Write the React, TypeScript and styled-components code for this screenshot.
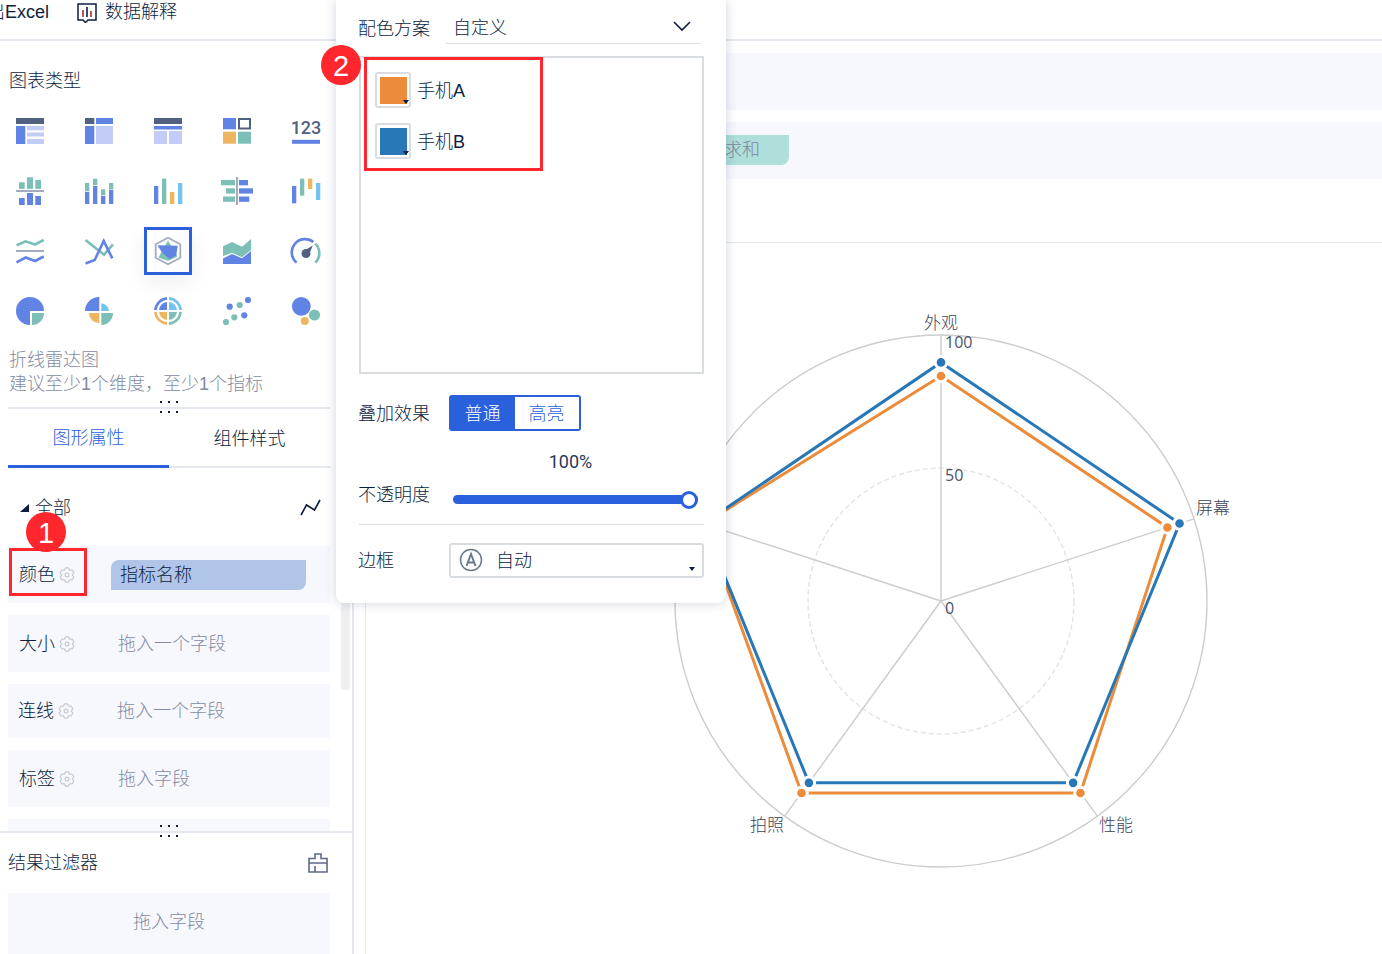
import React from "react";
import styled, { createGlobalStyle, css } from "styled-components";

const palette = {
  ink: "#0b1e40",
  muted: "#828b9f",
  line: "#e4e8ef",
  control: "#d9dde2",
  shelf: "#f7f8fd",
  primary: "#2a60db",
  alert: "#ff262d",
  blue: "#6183e3",
  green: "#7bbfb6",
  orange: "#eeb561",
  sky: "#73c3f1",
  slate: "#516181",
  pale: "#c1cdf6",
  grey: "#a3acbf",
  seriesA: "#ec8b3a",
  seriesB: "#2877b6",
};

const GlobalStyle = createGlobalStyle`
  *, *::before, *::after { box-sizing: border-box; }
  body {
    margin: 0;
    background: #fff;
    color: ${palette.ink};
    font-family: "Liberation Sans", "Noto Sans CJK SC", sans-serif;
    font-size: 18px;
    font-weight: 300;
    line-height: 24px;
  }
  button, select, input { font: inherit; color: inherit; margin: 0; }
  button { padding: 0; border: 0; background: none; cursor: pointer; }
  svg { display: block; flex: none; }
`;

const Page = styled.div`
  position: relative;
  display: flex;
  flex-direction: column;
  height: 100vh;
  overflow: hidden;
`;

const Toolbar = styled.header`
  display: flex;
  align-items: flex-start;
  gap: 28px;
  flex: none;
  height: 41px;
  margin-left: -13px;
  border-bottom: 2px solid ${palette.line};
`;

const ToolButton = styled.button`
  display: flex;
  align-items: center;
  gap: 8px;
  line-height: 25px;
  white-space: nowrap;
`;

const Workspace = styled.div`
  display: flex;
  flex: 1;
  min-height: 0;
`;

const Sidebar = styled.aside`
  display: flex;
  flex-direction: column;
  flex: none;
  width: 354px;
  border-right: 2px solid ${palette.line};
`;

const Properties = styled.section`
  display: flex;
  flex: 1;
  min-height: 0;
  overflow: hidden;
`;

const PropertiesContent = styled.div`
  flex: 1;
  padding: 28px 11px 0 8px;
`;

const ScrollTrack = styled.div`
  flex: none;
  width: 11px;
  padding: 499px 2px 0 0;
`;

const ScrollThumb = styled.div`
  height: 150px;
  border-radius: 4px;
  background: #edeff1;
`;

const Heading = styled.h2`
  margin: 0;
  font-size: 18px;
  font-weight: 300;
  line-height: 24px;
`;

const TypesHeading = styled(Heading)`
  padding-left: 1px;
`;

const ChartTypes = styled.div`
  display: grid;
  grid-template-columns: repeat(5, 48px);
  grid-auto-rows: 48px;
  justify-content: space-between;
  row-gap: 12px;
  margin: 14px 0 0 -2px;
`;

const ChartTypeButton = styled.button<{ $selected?: boolean }>`
  display: flex;
  align-items: center;
  justify-content: center;
  ${(p) =>
    p.$selected &&
    css`
      border: 3px solid ${palette.primary};
      box-shadow: 0 8px 20px rgba(20, 30, 60, 0.07);
    `}
`;

const Hint = styled.p`
  margin: 13px 0 11px;
  padding-left: 1px;
  color: ${palette.muted};
`;

const Divider = styled.div`
  display: flex;
  justify-content: center;
  position: relative;
  flex: none;
  height: 2px;
  background: ${palette.line};
`;

const FilterDivider = styled(Divider)`
  padding-right: 14px;
`;

const GripIcon = styled.svg`
  flex: none;
  margin-top: -6px;
  overflow: visible;
`;

const Tabs = styled.div`
  display: grid;
  grid-template-columns: 1fr 1fr;
`;

const Tab = styled.button<{ $active?: boolean }>`
  height: 59px;
  padding-top: 2px;
  border-bottom: ${(p) => (p.$active ? `3px solid ${palette.primary}` : `2px solid ${palette.line}`)};
  color: ${(p) => (p.$active ? palette.primary : palette.ink)};
`;

const GroupHeader = styled.div`
  display: flex;
  align-items: center;
  justify-content: space-between;
  margin-top: 28px;
  padding: 0 9px 0 12px;
`;

const GroupToggle = styled.button`
  display: flex;
  align-items: center;
  gap: 6px;
`;

const Rows = styled.div`
  display: flex;
  flex-direction: column;
  gap: 12px;
  margin-top: 26px;
`;

const Row = styled.div<{ $compact?: boolean }>`
  position: relative;
  display: flex;
  align-items: center;
  height: ${(p) => (p.$compact ? 54 : 57)}px;
  padding-left: ${(p) => (p.$compact ? 10 : 11)}px;
  background: ${palette.shelf};
`;

const RowLabel = styled.div`
  display: flex;
  align-items: center;
  gap: 4px;
  flex: none;
  width: 92px;
`;

const Placeholder = styled.span`
  padding-left: 7px;
  color: ${palette.muted};
`;

const FieldPill = styled.div`
  width: 195px;
  height: 30px;
  padding-left: 9px;
  border-radius: 8px 0;
  background: #b0c5e8;
  line-height: 30px;
`;

const Callout = styled.div`
  position: absolute;
  z-index: 2;
  border: 3px solid ${palette.alert};
  pointer-events: none;
`;

const ColorCallout = styled(Callout)`
  left: 1px;
  top: 2px;
  width: 78px;
  height: 48px;
`;

const SwatchCallout = styled(Callout)`
  left: 3px;
  top: -1px;
  width: 179px;
  height: 114px;
`;

const StepBadge = styled.span<{ $left: number; $top: number }>`
  position: absolute;
  left: ${(p) => p.$left}px;
  top: ${(p) => p.$top}px;
  width: 40px;
  height: 40px;
  border-radius: 50%;
  background: ${palette.alert};
  color: #fff;
  font-size: 29px;
  line-height: 42px;
  text-align: center;
`;

const Filters = styled.section`
  flex: none;
  height: 121px;
  overflow: hidden;
`;

const FiltersHeader = styled.div`
  display: flex;
  align-items: center;
  justify-content: space-between;
  height: 60px;
  padding: 0 24px 0 8px;
`;

const FiltersDrop = styled.div`
  height: 61px;
  margin: 0 22px 0 8px;
  background: ${palette.shelf};
  color: ${palette.muted};
  line-height: 58px;
  text-align: center;
`;

const Main = styled.main`
  display: flex;
  flex-direction: column;
  flex: 1;
  gap: 12px;
  min-width: 0;
  padding: 12px 0 0 11px;
`;

const Shelf = styled.div`
  flex: none;
  height: 57px;
  padding: 13px 0 0 229px;
  background: ${palette.shelf};
`;

const MeasurePill = styled.div`
  width: 195px;
  height: 30px;
  padding-right: 29px;
  border-radius: 8px 0;
  background: #aedfdb;
  color: #7f89a0;
  line-height: 30px;
  text-align: right;
`;

const ChartArea = styled.section`
  display: flex;
  justify-content: center;
  flex: 1;
  min-height: 0;
  margin-top: 51px;
  padding: 58px 0 0 134px;
  overflow: hidden;
  border: solid ${palette.line};
  border-width: 1px 0 0 1px;
`;

const AxisLabel = styled.text`
  fill: #3b455b;
  font-family: "Noto Sans CJK SC", sans-serif;
  font-size: 17px;
  font-weight: 300;
`;

const TickLabel = styled.text`
  fill: #4a5367;
  font-family: "Open Sans", sans-serif;
  font-size: 16px;
  font-weight: 400;
`;

const Popover = styled.section`
  position: absolute;
  left: 336px;
  top: 0;
  z-index: 3;
  width: 390px;
  padding: 12px 22px 25px 23px;
  border-radius: 0 0 8px 8px;
  background: #fff;
  box-shadow: 0 0 12px rgba(20, 35, 80, 0.2);
`;

const Field = styled.div`
  display: flex;
  align-items: center;
`;

const FieldLabel = styled.label`
  flex: none;
  width: 91px;
  margin-left: -1px;
  padding-top: 1px;
`;

const SchemeBox = styled.div`
  position: relative;
  width: 255px;
  height: 32px;
  margin-left: -3px;
  border-bottom: 1px solid ${palette.control};
  svg { position: absolute; right: 10px; top: 9px; }
`;

const BareSelect = styled.select<{ $indent: number }>`
  width: 100%;
  height: 100%;
  padding: 1px 0 0 ${(p) => p.$indent}px;
  border: 0;
  background: transparent;
  appearance: none;
`;

const SwatchList = styled.div`
  position: relative;
  display: flex;
  flex-direction: column;
  gap: 15px;
  height: 318px;
  margin-top: 12px;
  padding: 14px;
  border: 2px solid ${palette.control};
`;

const SwatchRow = styled.div`
  display: flex;
  align-items: center;
  gap: 6px;
  line-height: 36px;
`;

const SwatchName = styled.span`
  height: 36px;
  line-height: 38px;
`;

const Swatch = styled.button<{ $color: string }>`
  position: relative;
  width: 36px;
  height: 36px;
  padding: 3px;
  border: 2px solid ${palette.control};
  border-radius: 3px;
  &::before {
    content: "";
    display: block;
    width: 27px;
    height: 27px;
    background: ${(p) => p.$color};
  }
  svg { position: absolute; right: 0; bottom: 2px; }
`;

const BlendField = styled(Field)`
  margin-top: 21px;
`;

const Segments = styled.div`
  display: grid;
  grid-template-columns: 1fr 1fr;
  width: 132px;
  height: 36px;
  border: 2px solid ${palette.primary};
  border-radius: 3px;
`;

const Segment = styled.button<{ $active?: boolean }>`
  padding: 2px 1px 0 0;
  background: ${(p) => (p.$active ? palette.primary : "#fff")};
  color: ${(p) => (p.$active ? "#fff" : palette.primary)};
`;

const OpacityField = styled(Field)`
  align-items: flex-start;
  margin-top: 19px;
  label { padding-top: 33px; }
`;

const OpacityControl = styled.div`
  display: flex;
  flex-direction: column;
  gap: 16px;
  width: 245px;
  margin-left: 4px;
`;

const OpacityValue = styled.output`
  padding-right: 10px;
  color: #2a3a58;
  font-family: Roboto, sans-serif;
  font-weight: 400;
  text-align: center;
`;

const Slider = styled.input`
  width: 100%;
  height: 18px;
  background: transparent;
  appearance: none;
  &::-webkit-slider-runnable-track {
    height: 9px;
    border-radius: 5px;
    background: ${palette.primary};
  }
  &::-webkit-slider-thumb {
    width: 18px;
    height: 18px;
    margin-top: -4px;
    border: 3px solid ${palette.primary};
    border-radius: 50%;
    background: #fff;
    appearance: none;
  }
`;

const Rule = styled.hr`
  height: 1px;
  margin: 16px 0 18px;
  border: 0;
  background: ${palette.control};
`;

const BorderBox = styled.div`
  position: relative;
  flex: 1;
  height: 35px;
  border: 2px solid ${palette.control};
  border-radius: 3px;
`;

const AutoIcon = styled.svg`
  position: absolute;
  left: 8px;
  top: 3px;
`;

const CaretIcon = styled.svg`
  position: absolute;
  right: 7px;
  bottom: 5px;
`;

type Bar = [x: number, y: number, w: number, h: number, fill: string];

const Bars = ({ items }: { items: Bar[] }) => (
  <>
    {items.map(([x, y, w, h, fill], i) => (
      <rect key={i} x={x} y={y} width={w} height={h} fill={fill} />
    ))}
  </>
);

const Poly = ({ d, color, width = 2.6 }: { d: string; color: string; width?: number }) => (
  <polyline points={d} fill="none" stroke={color} strokeWidth={width} />
);

const { blue, green, orange, sky, slate, pale, grey } = palette;

const chartTypes: { name: string; art: React.ReactNode }[] = [
  {
    name: "分组表",
    art: <Bars items={[[2, 3, 28, 6, slate], [2, 11, 9.3, 18, blue], [13, 11, 17, 4.3, pale], [13, 17.5, 17, 4, pale], [13, 24, 17, 5, pale]]} />,
  },
  {
    name: "交叉表",
    art: <Bars items={[[2, 3, 9.3, 6, slate], [13, 3, 17, 6, blue], [2, 11, 9.3, 18, blue], [13, 11, 17, 18, pale]]} />,
  },
  {
    name: "明细表",
    art: <Bars items={[[2, 3, 28, 6, slate], [2, 11, 28, 3.5, blue], [2, 16, 13, 13, pale], [17, 16, 13, 13, pale]]} />,
  },
  {
    name: "颜色表格",
    art: (
      <>
        <Bars items={[[2, 3, 13, 11.3, blue], [2, 16.7, 13, 12, orange], [17, 16.7, 13, 12, green]]} />
        <rect x="18" y="4" width="11" height="9.5" fill="none" stroke={slate} strokeWidth="2" />
      </>
    ),
  },
  {
    name: "KPI指标卡",
    art: (
      <>
        <text x="16" y="19" textAnchor="middle" fill={slate} fontFamily="Roboto, sans-serif" fontSize="18" fontWeight="500">123</text>
        <rect x="2" y="24.8" width="28" height="4" fill={blue} />
      </>
    ),
  },
  {
    name: "对比柱状图",
    art: <Bars items={[[5, 7.3, 5.7, 6.6, green], [13, 2.3, 6, 11.6, green], [21.3, 5, 5.7, 8.9, green], [2, 15, 28, 2, grey], [5, 23, 5.7, 7, blue], [13, 18, 6, 12, blue], [21.3, 21, 5.7, 9, blue]]} />,
  },
  {
    name: "堆积柱状图",
    art: <Bars items={[[2, 8, 4.3, 8.3, green], [2, 17, 4.3, 12, blue], [10, 3.7, 4.3, 6.6, green], [10, 11, 4.3, 18, blue], [18, 14.3, 4.3, 6, green], [18, 21, 4.3, 8, blue], [26, 8, 4.3, 6.5, green], [26, 15, 4.3, 14, blue]]} />,
  },
  {
    name: "多系列柱状图",
    art: <Bars items={[[2, 11, 4.3, 18, blue], [10, 3.7, 4.3, 25.3, green], [18, 17, 4.3, 12, orange], [26, 8, 4.3, 21, sky]]} />,
  },
  {
    name: "对比条形图",
    art: <Bars items={[[15, 2, 2, 28, grey], [0, 5, 14, 5.3, green], [5, 13.3, 9, 5.3, green], [2, 21.5, 12, 5.3, green], [18, 5, 9, 5.3, blue], [18, 13.3, 14, 5.3, blue], [18, 21.5, 10.3, 5.3, blue]]} />,
  },
  {
    name: "瀑布图",
    art: <Bars items={[[2, 11, 4.3, 17.3, blue], [10, 3.7, 4.3, 17, green], [18, 3.7, 4.3, 10.3, orange], [26, 8, 4.3, 17, sky]]} />,
  },
  {
    name: "对比折线图",
    art: (
      <>
        <Poly d="2.5,10.3 11.7,6.3 21,9.5 29.7,5" color={green} />
        <rect x="2" y="15" width="28" height="2" fill={grey} />
        <Poly d="2.5,27.3 11.7,22.5 21,26 29.7,21.5" color={blue} />
      </>
    ),
  },
  {
    name: "多系列折线图",
    art: (
      <>
        <Poly d="2.5,5 21,19.7 30,9.3" color={green} />
        <Poly d="2.5,28.5 11.7,25 20.7,6 29.3,23.3" color={blue} />
      </>
    ),
  },
  {
    name: "雷达图",
    art: (
      <>
        <polygon points="16,2.7 28.3,9.3 28.3,22.7 16,29.3 3.7,22.7 3.7,9.3" fill="none" stroke={grey} strokeWidth="1.8" />
        <polygon points="16,5.5 25.5,21.5 16,26 6.5,22.5" fill={green} />
        <polygon points="5.5,10.3 25.7,10.7 24.3,20.3 17.7,24 10,17.5" fill={blue} />
      </>
    ),
  },
  {
    name: "面积图",
    art: (
      <>
        <polygon points="2,11.3 11,7 21,11.7 30,4 30,15 21,22.3 11,17.7 2,21" fill={green} />
        <polygon points="2,23.5 11,19 21,23.3 30,16 30,29 2,29" fill={blue} />
      </>
    ),
  },
  {
    name: "仪表盘",
    art: (
      <>
        <path d="M6.6 27.6A13.2 13.2 0 0 1 23.4 7.1" fill="none" stroke={blue} strokeWidth="2.6" />
        <path d="M25.2 8.6A13.2 13.2 0 0 1 25.4 27.6" fill="none" stroke={green} strokeWidth="2.6" />
        <circle cx="16" cy="18.5" r="4.5" fill={slate} />
        <path d="M14.5 15.5L22.8 10.5L19 19.5Z" fill={slate} />
      </>
    ),
  },
  {
    name: "饼图",
    art: (
      <>
        <path d="M16 16V30A14 14 0 1 1 30 16Z" fill={blue} />
        <path d="M18 18H30A12 12 0 0 1 18 30Z" fill={green} />
      </>
    ),
  },
  {
    name: "玫瑰图",
    art: (
      <>
        <path d="M16.3 16H2A14 14 0 0 1 16.3 2Z" fill={blue} />
        <path d="M18.3 16V8.3A8 8 0 0 1 26 16Z" fill={sky} />
        <path d="M16.3 18V28A10 10 0 0 1 6 18Z" fill={orange} />
        <path d="M18.3 18H30A12 12 0 0 1 18.3 30Z" fill={green} />
      </>
    ),
  },
  {
    name: "多层饼图",
    art: (
      <>
        <path d="M3.4 15A12.6 12.6 0 0 1 15 3.4" fill="none" stroke={blue} strokeWidth="2.6" />
        <path d="M17 3.4A12.6 12.6 0 0 1 28.6 15" fill="none" stroke={sky} strokeWidth="2.6" />
        <path d="M28.6 17A12.6 12.6 0 0 1 17 28.6" fill="none" stroke={green} strokeWidth="2.6" />
        <path d="M15 28.6A12.6 12.6 0 0 1 3.4 17" fill="none" stroke={orange} strokeWidth="2.6" />
        <path d="M15 15H7A9 9 0 0 1 15 7Z" fill={blue} />
        <path d="M17 15V7A9 9 0 0 1 25 15Z" fill={sky} />
        <path d="M17 17H25A9 9 0 0 1 17 25Z" fill={green} />
        <path d="M15 17V25A9 9 0 0 1 7 17Z" fill={orange} />
      </>
    ),
  },
  {
    name: "散点图",
    art: (
      <>
        {[[27, 5, blue], [8.7, 11.7, blue], [18.7, 10, green], [23.3, 20.3, blue], [13.3, 22.3, green], [5, 27, green]].map(([x, y, c], i) => (
          <circle key={i} cx={x} cy={y} r="3.1" fill={String(c)} />
        ))}
      </>
    ),
  },
  {
    name: "气泡图",
    art: (
      <>
        <circle cx="11.3" cy="11.3" r="9.4" fill={blue} />
        <circle cx="24.5" cy="20" r="5.6" fill={green} />
        <circle cx="14.8" cy="26" r="4" fill={orange} />
      </>
    ),
  },
];

const GearIcon = () => (
  <svg width="16" height="16" viewBox="0 0 16 16" fill="none" stroke="#c5cad3" strokeWidth="1.2" strokeLinejoin="round" aria-hidden>
    <path d="M6.6 0.9H9.4L10.6 3.2L13.3 3.2L14.8 5.8L13.3 8L14.8 10.2L13.3 12.8L10.6 12.8L9.4 15.1H6.6L5.4 12.8L2.7 12.8L1.2 10.2L2.7 8L1.2 5.8L2.7 3.2L5.4 3.2Z" />
    <circle cx="8" cy="8" r="1.9" />
  </svg>
);

const Grip = () => (
  <GripIcon width="18" height="12" viewBox="0 0 18 12" fill={palette.ink} aria-hidden>
    {[0, 8, 16].map((x) => (
      <React.Fragment key={x}>
        <rect x={x} y="0" width="2" height="2" />
        <rect x={x} y="10" width="2" height="2" />
      </React.Fragment>
    ))}
  </GripIcon>
);

const properties = [
  { label: "颜色", field: "指标名称" },
  { label: "大小", hint: "拖入一个字段" },
  { label: "连线", hint: "拖入一个字段", compact: true },
  { label: "标签", hint: "拖入字段" },
];

const CENTER = 300;
const RADIUS = 266;

const polar = (value: number, index: number) => {
  const angle = ((index * 72 - 90) * Math.PI) / 180;
  const r = (RADIUS * value) / 100;
  return [CENTER + r * Math.cos(angle), CENTER + r * Math.sin(angle)];
};

const series = [
  { name: "手机A", color: palette.seriesA, values: [84.6, 89.5, 89.2, 89.2, 93.8] },
  { name: "手机B", color: palette.seriesB, values: [89.7, 94.3, 84.5, 84.5, 94] },
];

const RadarChart = () => (
  <svg width="600" height="600" viewBox="0 0 600 600" role="img" aria-label="雷达图">
    <circle cx={CENTER} cy={CENTER} r={RADIUS} fill="none" stroke="#cccccc" strokeWidth="1.4" />
    <circle cx={CENTER} cy={CENTER} r={RADIUS / 2} fill="none" stroke="#e3e3e3" strokeWidth="1.4" strokeDasharray="5 3" />
    {[0, 1, 2, 3, 4].map((i) => {
      const [x, y] = polar(100, i);
      return <line key={i} x1={CENTER} y1={CENTER} x2={x} y2={y} stroke="#cccccc" strokeWidth="1.4" />;
    })}
    {series.map((s) => (
      <g key={s.name}>
        <polygon points={s.values.map((v, i) => polar(v, i).join(",")).join(" ")} fill="none" stroke={s.color} strokeWidth="3" />
        {s.values.map((v, i) => {
          const [cx, cy] = polar(v, i);
          return <circle key={i} cx={cx} cy={cy} r="5.8" fill={s.color} stroke="#fff" strokeWidth="3" />;
        })}
      </g>
    ))}
    <AxisLabel x="300" y="28" textAnchor="middle">外观</AxisLabel>
    <AxisLabel x="555" y="213">屏幕</AxisLabel>
    <AxisLabel x="458" y="530">性能</AxisLabel>
    <AxisLabel x="143" y="530" textAnchor="end">拍照</AxisLabel>
    <TickLabel x="304" y="47">100</TickLabel>
    <TickLabel x="304" y="180">50</TickLabel>
    <TickLabel x="304" y="313">0</TickLabel>
  </svg>
);

export default function App() {
  return (
    <>
      <GlobalStyle />
      <Page>
        <Toolbar>
          <ToolButton>出Excel</ToolButton>
          <ToolButton>
            <svg width="20" height="20" viewBox="0 0 20 20" fill="none" aria-hidden>
              <path d="M1 1H19V17H11L8.5 19.5L6 17H1Z" stroke={palette.ink} strokeWidth="1.5" />
              <path d="M6 7V14" stroke="#a52a3c" strokeWidth="1.6" />
              <path d="M10 4V14" stroke={palette.ink} strokeWidth="1.6" />
              <path d="M14 8V14" stroke="#a52a3c" strokeWidth="1.6" />
            </svg>
            数据解释
          </ToolButton>
        </Toolbar>

        <Workspace>
          <Sidebar>
            <Properties>
              <PropertiesContent>
                <TypesHeading>图表类型</TypesHeading>
                <ChartTypes>
                  {chartTypes.map((t) => (
                    <ChartTypeButton key={t.name} aria-label={t.name} $selected={t.name === "雷达图"}>
                      <svg width="32" height="32" viewBox="0 0 32 32" aria-hidden>{t.art}</svg>
                    </ChartTypeButton>
                  ))}
                </ChartTypes>
                <Hint>
                  折线雷达图
                  <br />
                  建议至少1个维度，至少1个指标
                </Hint>
                <Divider>
                  <Grip />
                </Divider>
                <Tabs>
                  <Tab $active>图形属性</Tab>
                  <Tab>组件样式</Tab>
                </Tabs>
                <GroupHeader>
                  <GroupToggle>
                    <svg width="9" height="9" viewBox="0 0 9 9" aria-hidden>
                      <path d="M9 0V8H0Z" fill={palette.ink} />
                    </svg>
                    全部
                  </GroupToggle>
                  <svg width="21" height="18" viewBox="0 0 21 18" fill="none" aria-hidden>
                    <path d="M1 16L6.5 6L14.5 11L20 1" stroke={palette.ink} strokeWidth="1.6" />
                  </svg>
                </GroupHeader>
                <Rows>
                  {properties.map((p) => (
                    <Row key={p.label} $compact={p.compact}>
                      <RowLabel>
                        {p.label}
                        <GearIcon />
                      </RowLabel>
                      {p.field ? <FieldPill>{p.field}</FieldPill> : <Placeholder>{p.hint}</Placeholder>}
                      {p.field && (
                        <ColorCallout>
                          <StepBadge $left={14} $top={-39}>1</StepBadge>
                        </ColorCallout>
                      )}
                    </Row>
                  ))}
                  <Row />
                </Rows>
              </PropertiesContent>
              <ScrollTrack>
                <ScrollThumb />
              </ScrollTrack>
            </Properties>
            <FilterDivider>
              <Grip />
            </FilterDivider>
            <Filters>
              <FiltersHeader>
                <Heading>结果过滤器</Heading>
                <svg width="20" height="20" viewBox="0 0 20 20" fill="none" stroke="#5d6b85" strokeWidth="1.6" aria-hidden>
                  <path d="M1 5.5H7V1H13V5.5H19V19H1ZM1 10H19M7 13V19" />
                </svg>
              </FiltersHeader>
              <FiltersDrop>拖入字段</FiltersDrop>
            </Filters>
          </Sidebar>

          <Main>
            <Shelf />
            <Shelf>
              <MeasurePill>求和</MeasurePill>
            </Shelf>
            <ChartArea>
              <RadarChart />
            </ChartArea>
          </Main>
        </Workspace>

        <Popover>
          <Field>
            <FieldLabel htmlFor="scheme">配色方案</FieldLabel>
            <SchemeBox>
              <BareSelect id="scheme" $indent={7}>
                <option>自定义</option>
              </BareSelect>
              <svg width="18" height="11" viewBox="0 0 18 11" fill="none" aria-hidden>
                <path d="M1 1L9 9L17 1" stroke={palette.ink} strokeWidth="1.6" />
              </svg>
            </SchemeBox>
          </Field>
          <SwatchList>
            {series.map((s) => (
              <SwatchRow key={s.name}>
                <Swatch $color={s.color} aria-label={s.name}>
                  <svg width="6" height="4" viewBox="0 0 6 4" aria-hidden>
                    <path d="M0 0H6L3 4Z" fill={palette.ink} />
                  </svg>
                </Swatch>
                <SwatchName>{s.name}</SwatchName>
              </SwatchRow>
            ))}
            <SwatchCallout>
              <StepBadge $left={-46} $top={-15}>2</StepBadge>
            </SwatchCallout>
          </SwatchList>
          <BlendField>
            <FieldLabel as="span">叠加效果</FieldLabel>
            <Segments>
              <Segment $active>普通</Segment>
              <Segment>高亮</Segment>
            </Segments>
          </BlendField>
          <OpacityField>
            <FieldLabel htmlFor="opacity">不透明度</FieldLabel>
            <OpacityControl>
              <OpacityValue htmlFor="opacity">100%</OpacityValue>
              <Slider id="opacity" type="range" min="0" max="100" defaultValue="100" />
            </OpacityControl>
          </OpacityField>
          <Rule />
          <Field>
            <FieldLabel htmlFor="border">边框</FieldLabel>
            <BorderBox>
              <AutoIcon width="24" height="24" viewBox="0 0 24 24" fill="none" stroke="#6b778c" aria-hidden>
                <circle cx="12" cy="12" r="10.5" strokeWidth="1.5" />
                <path d="M7.5 18L12 6L16.5 18M9 14.5H15" strokeWidth="2" />
              </AutoIcon>
              <BareSelect id="border" $indent={45}>
                <option>自动</option>
              </BareSelect>
              <CaretIcon width="6" height="4" viewBox="0 0 6 4" aria-hidden>
                <path d="M0 0H6L3 4Z" fill={palette.ink} />
              </CaretIcon>
            </BorderBox>
          </Field>
        </Popover>
      </Page>
    </>
  );
}
